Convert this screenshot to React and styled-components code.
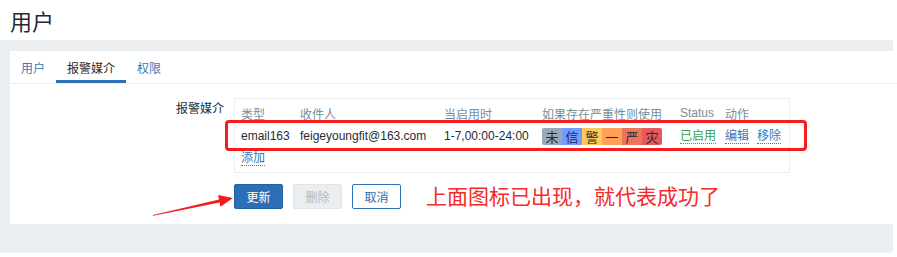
import React from "react";
import styled, { createGlobalStyle } from "styled-components";

const GlobalStyle = createGlobalStyle`
  body {
    margin: 0;
    background: #ffffff;
    font-family: "Liberation Sans", Arial, "Noto Sans CJK SC", sans-serif;
    font-size: 12px;
    color: #1f2c33;
  }
`;

const Page = styled.div`
  position: relative;
  width: 897px;
  height: 257px;
  overflow: hidden;
`;

const Header = styled.div`
  height: 40px;
  padding-left: 10px;
  display: flex;
  align-items: center;
  font-size: 22px;
  color: #1f2c33;
`;

const Wrapper = styled.div`
  box-sizing: border-box;
  width: 893px;
  background: #ebeef0;
  padding: 11px 0 29px 10px;
  border-bottom-right-radius: 4px;
`;

const Panel = styled.div`
  box-sizing: border-box;
  width: calc(100% + 4px);
  height: 173px;
  background: #ffffff;
`;

const TabBar = styled.div`
  display: flex;
  border-bottom: 1px solid #ebeef0;
`;

const Tab = styled.div`
  box-sizing: border-box;
  height: 32px;
  padding: 4px 11px 0;
  display: flex;
  align-items: center;
  border-bottom: 3px solid ${(p) => (p.$active ? "#2d72b8" : "transparent")};
  color: ${(p) => (p.$active ? "#1f2c33" : "#3a78b8")};
`;

const FormRow = styled.div`
  display: grid;
  grid-template-columns: 214px 556px;
  column-gap: 10px;
  margin-top: 14px;
`;

const Label = styled.div`
  text-align: right;
  padding-top: 3px;
  line-height: 16px;
`;

const MediaTable = styled.div`
  position: relative;
  box-sizing: border-box;
  height: 75px;
  border: 1px solid #ebeef0;
  padding: 2px 0 0 6px;
`;

const Row = styled.div`
  display: grid;
  grid-template-columns: 59px 144px 98px 138px 45px auto;
  align-items: center;
  height: ${(p) => p.$h}px;
  color: ${(p) => (p.$head ? "#768d99" : "#1f2c33")};
`;

const Link = styled.span`
  color: ${(p) => p.$color || "#3a78b8"};
  border-bottom: 1px dotted ${(p) => p.$color || "#3a78b8"};
  margin-right: ${(p) => p.$gap || 0}px;
  line-height: 15px;
`;

const Severity = styled.div`
  display: flex;
  width: 120px;
  height: 17px;
  border-radius: 2px;
  overflow: hidden;
`;

const Level = styled.span`
  flex: 1;
  display: flex;
  align-items: center;
  justify-content: center;
  background: ${(p) => p.$bg};
  color: #1f2c33;
  font-size: 13px;
`;

const Highlight = styled.div`
  position: absolute;
  left: -10px;
  top: 21px;
  width: 582px;
  height: 31px;
  box-sizing: border-box;
  border: 3px solid #f41c1c;
  border-radius: 4px;
  pointer-events: none;
`;

const ButtonRow = styled.div`
  display: flex;
  align-items: center;
  gap: 10px;
  margin: 11px 0 0 224px;
`;

const Button = styled.button`
  box-sizing: border-box;
  width: 49px;
  height: 25px;
  padding: 0;
  font-family: inherit;
  font-size: 12px;
  border-radius: 2px;
  border: 1px solid
    ${(p) => (p.$kind === "primary" ? "#21619f" : p.$kind === "disabled" ? "#dfe4e7" : "#2d72b8")};
  background: ${(p) => (p.$kind === "primary" ? "#2b70b6" : p.$kind === "disabled" ? "#ebeef0" : "#ffffff")};
  color: ${(p) => (p.$kind === "primary" ? "#ffffff" : p.$kind === "disabled" ? "#acbbc2" : "#2b6cb0")};
`;

const Note = styled.div`
  margin-left: 15px;
  font-size: 21px;
  line-height: 25px;
  color: #f52a2a;
`;

const Arrow = styled.svg`
  position: absolute;
  left: 0;
  top: 0;
  pointer-events: none;
`;

const levels = [
  ["未", "#97aab3"],
  ["信", "#7499ff"],
  ["警", "#ffc859"],
  ["一", "#ffa059"],
  ["严", "#e97659"],
  ["灾", "#e45959"],
];

export default function App() {
  return (
    <Page>
      <GlobalStyle />
      <Header>用户</Header>
      <Wrapper>
        <Panel>
          <TabBar>
            <Tab>用户</Tab>
            <Tab $active>报警媒介</Tab>
            <Tab>权限</Tab>
          </TabBar>
          <FormRow>
            <Label>报警媒介</Label>
            <MediaTable>
              <Row $head $h={24}>
                <span>类型</span>
                <span>收件人</span>
                <span>当启用时</span>
                <span>如果存在严重性则使用</span>
                <span>Status</span>
                <span>动作</span>
              </Row>
              <Row $h={22}>
                <span>email163</span>
                <span>feigeyoungfit@163.com</span>
                <span>1-7,00:00-24:00</span>
                <Severity>
                  {levels.map(([t, c]) => (
                    <Level key={t} $bg={c}>
                      {t}
                    </Level>
                  ))}
                </Severity>
                <span>
                  <Link $color="#429e47">已启用</Link>
                </span>
                <span>
                  <Link $gap={8}>编辑</Link>
                  <Link>移除</Link>
                </span>
              </Row>
              <Row $h={22}>
                <span>
                  <Link>添加</Link>
                </span>
              </Row>
              <Highlight />
            </MediaTable>
          </FormRow>
          <ButtonRow>
            <Button $kind="primary">更新</Button>
            <Button $kind="disabled">删除</Button>
            <Button>取消</Button>
            <Note>上面图标已出现，就代表成功了</Note>
          </ButtonRow>
        </Panel>
      </Wrapper>
      <Arrow width="897" height="257" viewBox="0 0 897 257">
        <polygon
          points="153,215 219,199.4 218.1,195 233,198 220.5,206.8 219.6,202.4 153.3,215.8"
          fill="#f41c1c"
        />
      </Arrow>
    </Page>
  );
}
